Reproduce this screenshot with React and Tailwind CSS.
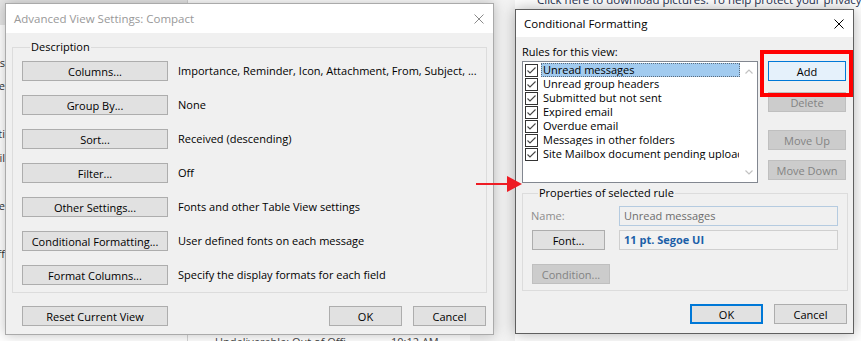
import React from 'react';

const btnBase = 'flex h-[20px] items-center justify-center border leading-none';

function Btn({ children, className = '', variant = 'normal' }) {
  const look = {
    normal: 'border-[#adadad] bg-[#e1e1e1] text-black',
    disabled: 'border-[#bfbfbf] bg-[#cccccc] text-[#838383]',
    hot: 'border-[#0078d7] bg-[#e5f1fb] text-black',
    primary: 'border-2 border-[#0078d7] bg-[#e1e1e1] text-black',
  }[variant];
  return <div className={`${btnBase} ${look} ${className}`}>{children}</div>;
}

function CloseIcon({ color }) {
  return (
    <svg width="10" height="10" viewBox="0 0 10 10">
      <path d="M0.5 0.5 L9.5 9.5 M9.5 0.5 L0.5 9.5" stroke={color} strokeWidth="1" fill="none" />
    </svg>
  );
}

function Check() {
  return (
    <svg width="13" height="13" viewBox="0 0 13 13" className="shrink-0">
      <rect x="0.5" y="0.5" width="12" height="12" fill="white" stroke="#333333" />
      <path d="M2.5 6.5 L5 9 L10.5 3.5" fill="none" stroke="#444444" strokeWidth="1.1" />
    </svg>
  );
}

const viewRows = [
  ['Columns...', 'Importance, Reminder, Icon, Attachment, From, Subject, ...'],
  ['Group By...', 'None'],
  ['Sort...', 'Received (descending)'],
  ['Filter...', 'Off'],
  ['Other Settings...', 'Fonts and other Table View settings'],
  ['Conditional Formatting...', 'User defined fonts on each message'],
  ['Format Columns...', 'Specify the display formats for each field'],
];

const rules = [
  'Unread messages',
  'Unread group headers',
  'Submitted but not sent',
  'Expired email',
  'Overdue email',
  'Messages in other folders',
  'Site Mailbox document pending upload',
];

const edgeBits = [
  ['s', 55],
  ['e', 78],
  ['ti', 126],
  ['il', 150],
  ['le', 198],
  ['ff', 246],
];

export default function App() {
  return (
    <div className="relative h-[341px] w-[861px] overflow-hidden bg-white font-['Open_Sans',sans-serif] text-[11px] leading-[16px] text-black">
      {/* outlook window behind the dialogs */}
      <div className="absolute left-0 top-0 h-[25px] w-[187px] bg-[#e6e6e6]" />
      <div className="absolute left-[187px] top-0 h-[341px] w-px bg-[#d4d4d4]" />
      <div className="absolute left-[470px] top-0 h-[341px] w-[45px] bg-[#f3f3f3]" />
      {edgeBits.map(([t, y]) => (
        <div key={y} className="absolute left-0 w-[5px] overflow-hidden text-right text-[#333]" style={{ top: y }}>
          <span className="float-right whitespace-nowrap">{t}</span>
        </div>
      ))}
      <div className="absolute left-[537px] top-[-8px] whitespace-nowrap text-[11.5px] text-[#1e3050]">
        Click here to download pictures. To help protect your privacy, Outlook prevented automatic download
      </div>
      <div className="absolute left-[215px] top-[334px] flex whitespace-nowrap text-[#444]">
        <span className="w-[176px]">Undeliverable: Out of Offi...</span>
        <span>10:12 AM</span>
      </div>

      {/* Advanced View Settings */}
      <div className="absolute left-[5px] top-[3px] flex h-[332px] w-[489px] flex-col border border-[#aaaaaa] bg-[#f0f0f0] shadow-[0_0_12px_rgba(0,0,0,0.25)]">
        <div className="flex h-[29px] shrink-0 items-center justify-between bg-white pl-[8px] pr-[9px] text-[11.5px] text-[#999999]">
          <span>Advanced View Settings: Compact</span>
          <CloseIcon color="#8a8a8a" />
        </div>
        <fieldset className="mx-[6px] mt-[6px] border border-[#dcdcdc] pb-[7px] pl-[9px] pr-[8px]">
          <legend className="ml-[8px] px-[1px] leading-[16px]">Description</legend>
          <div className="flex flex-col gap-[14px] pt-[6px]">
            {viewRows.map(([label, desc]) => (
              <div key={label} className="flex h-[20px] items-center">
                <Btn className="w-[146px]">{label}</Btn>
                <span className="ml-[10px] whitespace-nowrap">{desc}</span>
              </div>
            ))}
          </div>
        </fieldset>
        <div className="mt-[13px] flex items-center pl-[16px] pr-[7px]">
          <Btn className="w-[146px]">Reset Current View</Btn>
          <div className="ml-auto flex gap-[11px]">
            <Btn className="w-[73px]">OK</Btn>
            <Btn className="w-[73px]">Cancel</Btn>
          </div>
        </div>
      </div>

      {/* Conditional Formatting */}
      <div className="absolute left-[515px] top-[9px] flex h-[325px] w-[339px] flex-col border border-[#5f5f5f] bg-[#f0f0f0] shadow-[0_0_14px_rgba(0,0,0,0.3)]">
        <div className="flex h-[27px] shrink-0 items-center justify-between bg-white pl-[8px] pr-[9px]">
          <span className="text-[11.5px]">Conditional Formatting</span>
          <CloseIcon color="#000000" />
        </div>
        <div className="flex flex-col pl-[6px] pr-[5px]">
          <div className="mt-[7px]">Rules for this view:</div>
          <div className="mt-[1px] flex">
            <div className="flex h-[122px] w-[236px] border border-[#828790] bg-white">
              <div className="flex flex-1 flex-col pl-[2px] pt-[1px]">
                {rules.map((r, i) => (
                  <div key={r} className="flex h-[14px] items-center">
                    <Check />
                    <div
                      className={`ml-[3px] flex h-[14px] w-[199px] items-center overflow-hidden whitespace-nowrap px-[1px] ${
                        i === 0 ? 'border border-dotted border-[#5b6b7c] bg-[#a2cbef]' : 'border border-transparent'
                      }`}
                    >
                      {r}
                    </div>
                  </div>
                ))}
              </div>
              <div className="flex w-[17px] flex-col items-center justify-between py-[7px]">
                <svg width="8" height="5" viewBox="0 0 8 5">
                  <path d="M0.5 4.5 L4 1 L7.5 4.5" fill="none" stroke="#c2c2c2" strokeWidth="1.2" />
                </svg>
                <svg width="8" height="5" viewBox="0 0 8 5">
                  <path d="M0.5 0.5 L4 4 L7.5 0.5" fill="none" stroke="#c2c2c2" strokeWidth="1.2" />
                </svg>
              </div>
            </div>
            <div className="ml-[10px] flex flex-col">
              <Btn variant="hot" className="w-[78px]">Add</Btn>
              <Btn variant="disabled" className="mt-[11px] w-[78px]">Delete</Btn>
              <Btn variant="disabled" className="mt-[18px] w-[78px]">Move Up</Btn>
              <Btn variant="disabled" className="mt-[10px] w-[78px]">Move Down</Btn>
            </div>
          </div>
          <fieldset className="mt-[2px] w-[326px] border border-[#dcdcdc] pb-[6px] pl-[8px]">
            <legend className="ml-[7px] px-[1px] leading-[16px]">Properties of selected rule</legend>
            <div className="grid grid-cols-[88px_219px] items-center pt-[5px]">
              <span className="text-[#8d8d8d]">Name:</span>
              <div className="flex h-[20px] items-center border border-[#b5cbe0] bg-[#f0f0f0] px-[4px] text-[#6d6d6d]">
                Unread messages
              </div>
              <Btn className="ml-[1px] mt-[4px] w-[73px]">Font...</Btn>
              <div className="mt-[4px] flex h-[20px] items-center border border-[#cfcfcf] bg-[#f2f2f2] px-[4px] font-bold text-[#1b5fa8]">
                11 pt. Segoe UI
              </div>
              <Btn variant="disabled" className="ml-[1px] mt-[14px] w-[78px]">Condition...</Btn>
            </div>
          </fieldset>
          <div className="mt-[13px] flex justify-end gap-[11px] pr-[1px]">
            <Btn variant="primary" className="w-[73px]">OK</Btn>
            <Btn className="w-[73px]">Cancel</Btn>
          </div>
        </div>
      </div>

      {/* annotations */}
      <div className="absolute left-[760px] top-[50px] h-[47px] w-[93px] border-[4px] border-[#ff0000]" />
      <svg className="absolute left-[474px] top-[174px]" width="50" height="20" viewBox="0 0 50 20">
        <line x1="2" y1="10" x2="36" y2="10" stroke="#ee1c24" strokeWidth="2" />
        <polygon points="33,2 48,10 33,18" fill="#ee1c24" />
      </svg>
    </div>
  );
}
